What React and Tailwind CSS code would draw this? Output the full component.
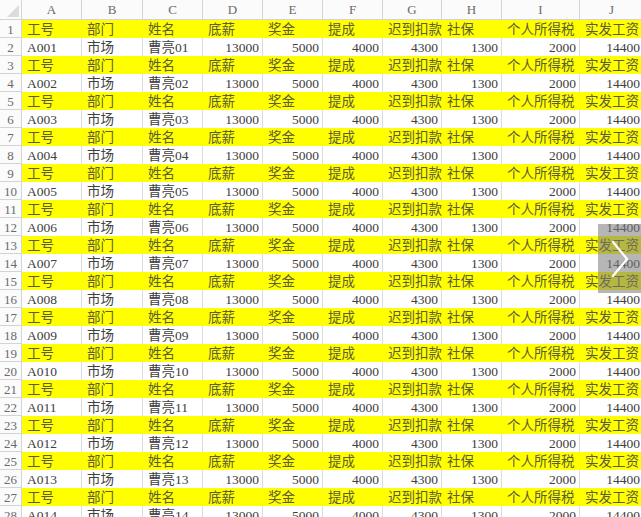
import React from "react";

const cols = ["A", "B", "C", "D", "E", "F", "G", "H", "I", "J"];
const labels = ["工号", "部门", "姓名", "底薪", "奖金", "提成", "迟到扣款", "社保", "个人所得税", "实发工资"];

const dataRow = (n) => {
  const k = String(n).padStart(2, "0");
  return [`A0${k}`, "市场", `曹亮${k}`, "13000", "5000", "4000", "4300", "1300", "2000", "14400"];
};

// first three columns are text, the rest are numbers (right aligned)
const isNum = (i) => i >= 3;

const rows = Array.from({ length: 28 }, (_, i) => {
  const r = i + 1;
  return r % 2 === 1
    ? { r, header: true, cells: labels }
    : { r, header: false, cells: dataRow(r / 2) };
});

const font = { fontFamily: '"Liberation Serif", "Noto Sans CJK SC", serif' };

const App = () => {
  return (
    <div
      className="relative w-[641px] h-[517px] overflow-hidden bg-white text-[13.5px] leading-none"
      style={font}
    >
      <div className="grid w-[644px] grid-cols-[22px_60px_61px_60px_60px_60px_60px_59px_60px_78px_64px] grid-rows-[20px_repeat(28,18px)]">
        {/* corner */}
        <div className="relative border-r border-b border-[#d4d4d4] bg-[#fbfbfb]">
          <div className="absolute right-[2px] bottom-[2px] w-0 h-0 border-l-[12px] border-l-transparent border-b-[12px] border-b-[#dcdcdc]" />
        </div>
        {cols.map((c) => (
          <div
            key={c}
            className="flex items-center justify-center border-r border-b border-[#d4d4d4] bg-[#fbfbfb] text-[13px] text-[#6a6a6a]"
          >
            {c}
          </div>
        ))}

        {rows.map((row) => (
          <React.Fragment key={row.r}>
            <div className="flex items-center justify-center pt-[1px] border-r border-b border-[#d4d4d4] bg-[#fbfbfb] text-[13px] text-[#6a6a6a]">
              {row.r}
            </div>
            {row.cells.map((v, i) =>
              row.header ? (
                <div
                  key={i}
                  className="flex items-center whitespace-nowrap bg-[#ffff00] pl-[5px] pt-[1px] text-[#5c5c38]"
                >
                  {v}
                </div>
              ) : (
                <div
                  key={i}
                  className={`flex items-center whitespace-nowrap border-r border-[#dcdcdc] pt-[1px] text-[#404040] ${
                    isNum(i) ? "justify-end pr-[3px]" : "pl-[5px]"
                  }`}
                >
                  {v}
                </div>
              )
            )}
          </React.Fragment>
        ))}
      </div>

      {/* next-image overlay */}
      <div className="absolute right-0 top-[224px] flex h-[69px] w-[43px] items-center justify-center bg-[#7a7a7a]/55">
        <svg width="18" height="38" viewBox="0 0 18 38" fill="none">
          <path d="M2 2 L16 19 L2 36" stroke="white" strokeWidth="2.2" strokeLinecap="round" strokeLinejoin="round" />
        </svg>
      </div>
    </div>
  );
};

export default App;
